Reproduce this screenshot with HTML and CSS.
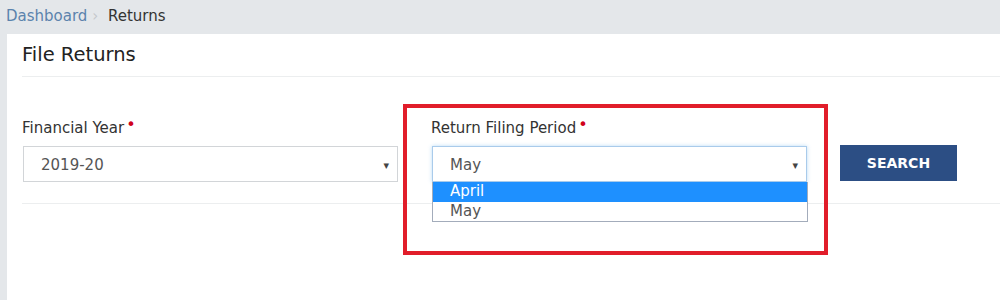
FILE: index.html
```html
<!DOCTYPE html>
<html lang="en">
<head>
  <meta charset="UTF-8">
  <title>File Returns</title>
  <link rel="stylesheet" href="styles.css">
</head>
<body>
  <div class="breadcrumb">
    <a href="#">Dashboard</a>
    <span class="sep">&rsaquo;</span>
    <span class="current">Returns</span>
  </div>

  <div class="card">
    <h3 class="card-title">File Returns</h3>

    <form class="search-form">
      <div class="field">
        <label>Financial Year<span class="req">&bull;</span></label>
        <div class="select">
          <span>2019-20</span>
          <span class="caret">&#9662;</span>
        </div>
      </div>

      <div class="field">
        <label>Return Filing Period<span class="req">&bull;</span></label>
        <div class="select focused">
          <span>May</span>
          <span class="caret">&#9662;</span>
        </div>
        <ul class="dropdown">
          <li class="active">April</li>
          <li>May</li>
        </ul>
      </div>

      <button class="search-button" type="button">SEARCH</button>
    </form>
  </div>

  <div class="highlight"></div>
</body>
</html>
```

FILE: styles.css
```css
body {
  margin: 0;
  background: #e4e7ea;
  font-family: "DejaVu Sans", Verdana, sans-serif;
  color: #333;
}

.breadcrumb {
  height: 34px;
  line-height: 32px;
  padding-left: 6px;
  font-size: 15px;
}

.breadcrumb a {
  color: #5b83ad;
  text-decoration: none;
}

.breadcrumb .sep {
  color: #c4c8cc;
  margin: 0 5px 0 0;
}

.breadcrumb .current {
  color: #333;
}

.card {
  margin-left: 7px;
  background: white;
  padding-left: 15px;
  height: 266px;
}

.card-title {
  margin: 0;
  height: 42px;
  line-height: 42px;
  font-size: 19.5px;
  font-weight: normal;
  color: #222;
  border-bottom: 1px solid #eceeef;
}

.search-form {
  display: flex;
  align-items: flex-start;
  padding: 41px 0 21px;
  border-bottom: 1px solid #eceeef;
}

.field {
  position: relative;
  width: 376px;
  margin-right: 33px;
}

.field label {
  display: block;
  font-size: 15px;
  line-height: 20px;
  margin-bottom: 8px;
  color: #333;
}

.req {
  color: #d0021b;
  margin-left: 2px;
  font-size: 16px;
  position: relative;
  top: -3px;
}

.select {
  display: flex;
  justify-content: space-between;
  align-items: center;
  margin-left: 1px;
  padding: 2px 8px 0 17px;
  box-sizing: border-box;
  height: 36px;
  border: 1px solid #d2d5d8;
  font-size: 15px;
  color: #555;
}

.select.focused {
  border-color: #a9cbeb;
  box-shadow: 0 0 4px rgba(102, 175, 233, 0.45);
}

.caret {
  font-size: 11px;
  color: #444;
}

.dropdown {
  position: absolute;
  top: 64px;
  left: 1px;
  right: -1px;
  margin: 0;
  padding: 0;
  list-style: none;
  background: white;
  border: 1px solid #a3acbb;
  border-top: none;
  font-size: 15px;
}

.dropdown li {
  height: 19px;
  line-height: 19px;
  padding-left: 17px;
  color: #555;
}

.dropdown li.active {
  background: #1e90ff;
  color: white;
  height: 20px;
}

.search-button {
  margin-top: 27px;
  width: 117px;
  height: 36px;
  background: #2c4e84;
  color: white;
  border: none;
  font-family: "DejaVu Sans", Verdana, sans-serif;
  font-size: 14px;
  font-weight: bold;
}

.highlight {
  position: absolute;
  left: 403px;
  top: 104px;
  width: 417px;
  height: 143px;
  border: 4px solid #e11d2a;
}
```
